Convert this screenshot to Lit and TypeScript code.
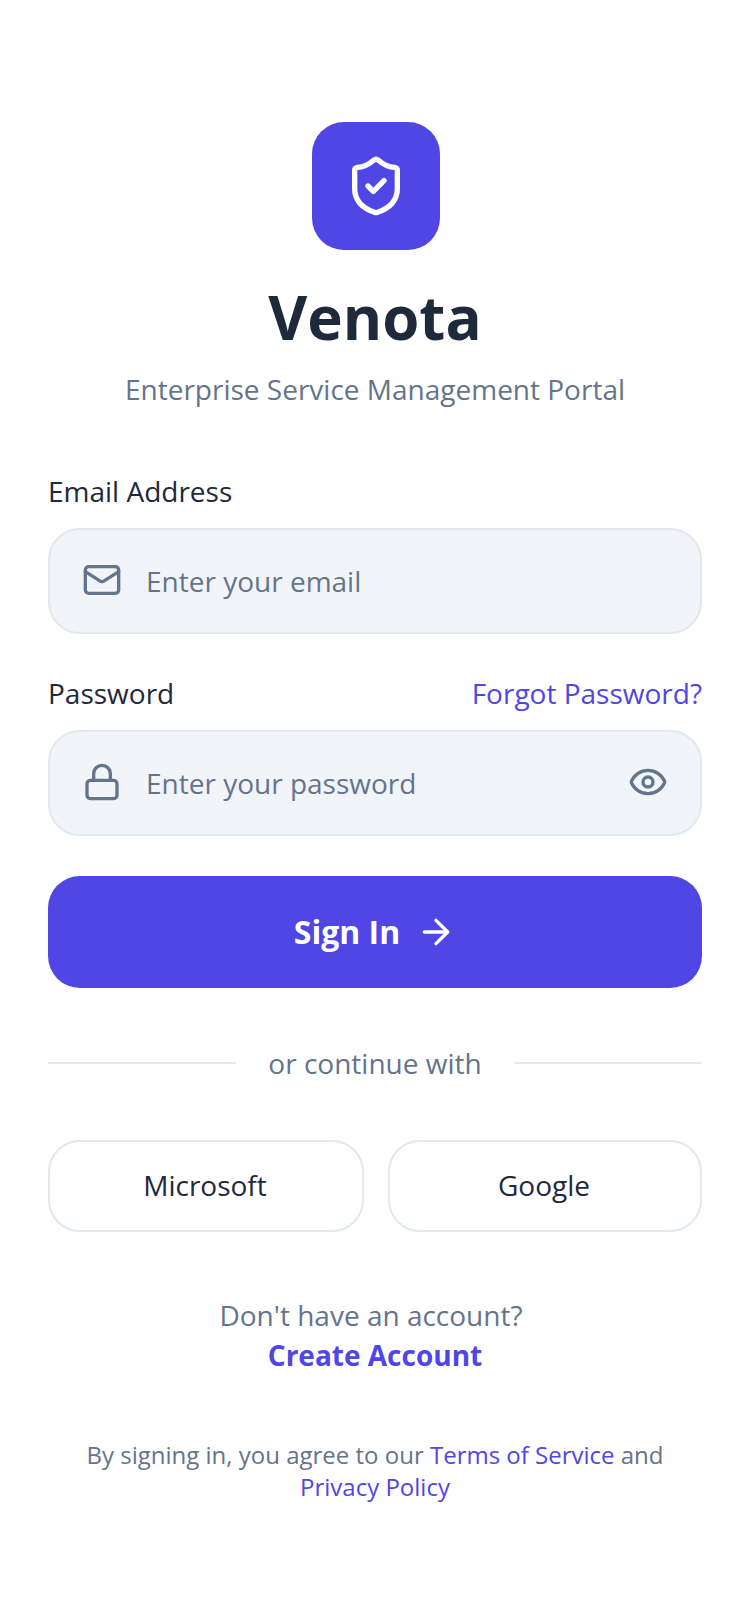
import { LitElement, html, css } from "lit";
import { customElement } from "lit/decorators.js";

@customElement("app-root")
export class AppRoot extends LitElement {
  static styles = css`
    :host { display: block; min-height: 1624px; background: #fff; font-family: "Open Sans", sans-serif; color: #1e293b; }
    .page { display: flex; flex-direction: column; padding: 122px 48px 0; }
    .head { display: flex; flex-direction: column; align-items: center; }
    .logo { width: 128px; height: 128px; margin-left: 2px; border-radius: 32px; background: #4f46e5; display: flex; align-items: center; justify-content: center; }
    svg { fill: none; stroke-linecap: round; stroke-linejoin: round; stroke-width: 2; flex: none; display: block; }
    .logo svg { width: 64px; height: 64px; stroke: #fff; }
    h1 { margin: 25px 0 0; font-size: 60px; line-height: 84px; font-weight: 700; letter-spacing: 0; }
    .sub { margin-top: 10px; font-size: 28px; line-height: 40px; color: #64748b; }
    .label-row { display: flex; justify-content: space-between; font-size: 28px; line-height: 40px; color: #1e293b; margin-bottom: 17px; }
    .first { margin-top: 62px; }
    .second { margin-top: 39px; }
    .link { color: #4f46e5; }
    .field { box-sizing: border-box; height: 106px; border: 2px solid #e2e8ee; border-radius: 32px; background: #f1f5f9; display: flex; align-items: center; padding: 0 32px; gap: 24px; font-size: 28px; color: #64748b; }
    .field svg { width: 40px; height: 40px; stroke: #64748b; margin-bottom: 2px; }
    .grow { flex: 1; }
    .btn { margin-top: 40px; height: 112px; box-sizing: border-box; padding-bottom: 2px; border-radius: 32px; background: #4f46e5; color: #fff; display: flex; align-items: center; justify-content: center; gap: 16px; font-size: 32px; font-weight: 700; }
    .btn svg { width: 40px; height: 40px; stroke: #fff; margin-top: 2px; }
    .divider { margin-top: 55px; display: flex; align-items: center; gap: 32px; font-size: 28px; line-height: 40px; color: #64748b; }
    .divider i { flex: 1; height: 2px; background: #e2e8ee; }
    .social { margin-top: 57px; display: grid; grid-template-columns: 316px 314px; gap: 24px; }
    .social div { height: 92px; box-sizing: border-box; padding: 0 2px 2px 0; border: 2px solid #e2e8ee; border-radius: 32px; display: flex; align-items: center; justify-content: center; font-size: 28px; color: #1e293b; }
    .signup { margin-top: 63px; text-align: center; font-size: 28px; line-height: 40px; color: #64748b; }
    .signup span { display: block; padding-right: 8px; }
    .signup b { display: block; color: #4f46e5; font-weight: 700; }
    .legal { margin-top: 64px; text-align: center; font-size: 24px; line-height: 32px; color: #64748b; }
  `;

  render() {
    return html`
      <div class="page">
        <div class="head">
          <div class="logo">
            <svg viewBox="0 0 24 24"><path d="M20 13c0 5-3.5 7.5-7.66 8.95a1 1 0 0 1-.67-.01C7.5 20.5 4 18 4 13V6a1 1 0 0 1 1-1c2 0 4.5-1.2 6.24-2.72a1.17 1.17 0 0 1 1.52 0C14.51 3.81 17 5 19 5a1 1 0 0 1 1 1z"/><path d="m9 12 2 2 4-4"/></svg>
          </div>
          <h1>Venota</h1>
          <div class="sub">Enterprise Service Management Portal</div>
        </div>
        <div class="label-row first"><span>Email Address</span></div>
        <div class="field">
          <svg viewBox="0 0 24 24"><rect x="2" y="4" width="20" height="16" rx="2"/><path d="m22 7-8.97 5.7a1.94 1.94 0 0 1-2.06 0L2 7"/></svg>
          <span>Enter your email</span>
        </div>
        <div class="label-row second"><span>Password</span><span class="link">Forgot Password?</span></div>
        <div class="field">
          <svg viewBox="0 0 24 24"><rect x="3" y="11" width="18" height="11" rx="2"/><path d="M7 11V7a5 5 0 0 1 10 0v4"/></svg>
          <span class="grow">Enter your password</span>
          <svg viewBox="0 0 24 24"><path d="M2.062 12.348a1 1 0 0 1 0-.696 10.75 10.75 0 0 1 19.876 0 1 1 0 0 1 0 .696 10.75 10.75 0 0 1-19.876 0"/><circle cx="12" cy="12" r="3"/></svg>
        </div>
        <div class="btn"><span>Sign In</span>
          <svg viewBox="0 0 24 24"><path d="M5 12h14"/><path d="m12 5 7 7-7 7"/></svg>
        </div>
        <div class="divider"><i></i><span>or continue with</span><i></i></div>
        <div class="social"><div>Microsoft</div><div>Google</div></div>
        <div class="signup"><span>Don't have an account?</span><b>Create Account</b></div>
        <div class="legal">By signing in, you agree to our <span class="link">Terms of Service</span> and<br><span class="link">Privacy Policy</span></div>
      </div>
    `;
  }
}
